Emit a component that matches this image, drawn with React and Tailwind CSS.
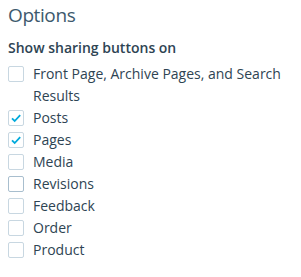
import React from 'react';

const items = [
  { label: 'Front Page, Archive Pages, and Search Results', checked: false },
  { label: 'Posts', checked: true },
  { label: 'Pages', checked: true },
  { label: 'Media', checked: false },
  { label: 'Revisions', checked: false, hover: true },
  { label: 'Feedback', checked: false },
  { label: 'Order', checked: false },
  { label: 'Product', checked: false },
];

const Checkbox = ({ checked, hover }) => (
  <span
    className={`mt-[3px] flex h-4 w-4 shrink-0 items-center justify-center rounded-[2px] border bg-white ${
      hover ? 'border-[#a8bece]' : 'border-[#c8d7e1]'
    }`}
  >
    {checked && (
      <svg width="12" height="12" viewBox="0 0 12 12" fill="none">
        <path d="M2 6.3 L4.7 9 L10.2 3.2" stroke="#00aadc" strokeWidth="1.8" />
      </svg>
    )}
  </span>
);

export default function App() {
  return (
    <div className="bg-white px-2 pt-[2px] text-[#2e4453]" style={{ fontFamily: '"Open Sans", sans-serif' }}>
      <h2 className="text-[19px] leading-[26px] tracking-[-0.4px] text-[#3d596d]">Options</h2>
      <p className="mt-[9px] text-[14px] font-semibold leading-[22px]">Show sharing buttons on</p>
      <ul className="mt-[4px]">
        {items.map((item) => (
          <li key={item.label} className="flex items-start gap-[9px]">
            <Checkbox checked={item.checked} hover={item.hover} />
            <span className="max-w-[255px] text-[14px] leading-[22px]">{item.label}</span>
          </li>
        ))}
      </ul>
    </div>
  );
}
